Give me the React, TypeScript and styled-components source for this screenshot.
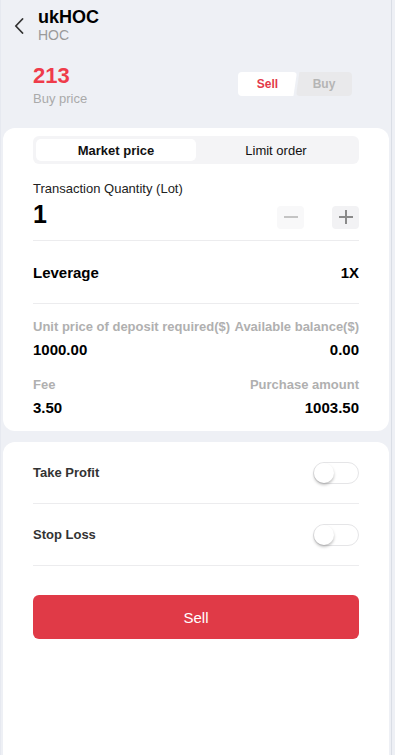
import React from "react";
import styled, { createGlobalStyle } from "styled-components";

const Global = createGlobalStyle`
  html, body { margin: 0; padding: 0; background: #eef0f5; }
  body { font-family: "Liberation Sans", Arial, sans-serif; color: #111; }
  * { box-sizing: border-box; }
`;

const Page = styled.div`
  width: 392px;
  min-height: 755px;
  background: #eef0f5;
  border-left: 1px solid #e6e9f0;
  border-right: 1px solid #dadee6;
  padding: 0 1px;
  display: flex;
  flex-direction: column;
`;

const Header = styled.div`
  display: flex;
  align-items: flex-start;
  padding: 7px 0 0 10px;
  gap: 12px;
  height: 43px;
`;

const BackBtn = styled.div`
  width: 14px;
  height: 18px;
  margin-top: 10px;
  display: flex;
  align-items: center;
  justify-content: center;
`;

const TitleBlock = styled.div`
  display: flex;
  flex-direction: column;
`;

const Title = styled.div`
  font-size: 18px;
  font-weight: 700;
  line-height: 20px;
  color: #000;
`;

const Sub = styled.div`
  font-size: 14px;
  line-height: 16px;
  color: #9a9a9a;
`;

const PriceRow = styled.div`
  display: flex;
  justify-content: space-between;
  align-items: flex-start;
  padding: 20px 38px 0 31px;
  height: 85px;
`;

const PriceBlock = styled.div`
  display: flex;
  flex-direction: column;
`;

const Price = styled.div`
  font-size: 22px;
  font-weight: 700;
  color: #ef3b4a;
  line-height: 26px;
`;

const PriceLabel = styled.div`
  font-size: 13px;
  color: #aaa;
  margin-top: 2px;
`;

const Toggle = styled.div`
  display: flex;
  margin-top: 9px;
  gap: 2px;
`;

const ToggleBtn = styled.div<{ $active?: boolean; $side: "l" | "r" }>`
  width: ${(p) => (p.$side === "l" ? 59 : 56)}px;
  height: 24px;
  display: flex;
  align-items: center;
  justify-content: center;
  font-size: 12px;
  font-weight: 700;
  color: ${(p) => (p.$active ? "#e3394a" : "#b5b5b5")};
  background: ${(p) => (p.$active ? "#fff" : "#e9e9eb")};
  border-radius: 4px;
  clip-path: ${(p) =>
    p.$side === "l"
      ? "polygon(0 0, 100% 0, 94% 100%, 0 100%)"
      : "polygon(6% 0, 100% 0, 100% 100%, 0 100%)"};
  margin-left: ${(p) => (p.$side === "r" ? "-3px" : "0")};
`;

const Card = styled.div<{ $grow?: boolean }>`
  background: #fff;
  border-radius: 12px;
  margin: 0 1px;
  padding: ${(p) => (p.$grow ? "0" : "8px")} 30px 0 30px;
  ${(p) => (p.$grow ? "flex: 1; border-bottom-left-radius: 0; border-bottom-right-radius: 0;" : "")}
`;

const Segmented = styled.div`
  display: flex;
  background: #f4f4f6;
  border-radius: 6px;
  padding: 3px;
  height: 28px;
`;

const Seg = styled.div<{ $active?: boolean }>`
  flex: 1;
  display: flex;
  align-items: center;
  justify-content: center;
  font-size: 13px;
  font-weight: ${(p) => (p.$active ? 700 : 400)};
  color: #111;
  background: ${(p) => (p.$active ? "#fff" : "transparent")};
  border-radius: 5px;
`;

const QtyLabel = styled.div`
  font-size: 13px;
  color: #222;
  margin-top: 18px;
  line-height: 14px;
`;

const QtyRow = styled.div`
  display: flex;
  align-items: center;
  justify-content: space-between;
  height: 30px;
  margin-top: 3px;
`;

const QtyValue = styled.div`
  font-size: 25px;
  font-weight: 700;
  color: #000;
`;

const Stepper = styled.div`
  display: flex;
  gap: 28px;
  margin-top: 6px;
`;

const StepBtn = styled.div<{ $disabled?: boolean }>`
  width: 27px;
  height: 23px;
  border-radius: 4px;
  background: ${(p) => (p.$disabled ? "#f8f8f9" : "#f2f2f4")};
  display: flex;
  align-items: center;
  justify-content: center;
`;

const Spacer = styled.div<{ $h: number }>`
  height: ${(p) => p.$h}px;
`;

const Divider = styled.div`
  height: 1px;
  background: #ececee;
`;

const LevRow = styled.div`
  display: flex;
  justify-content: space-between;
  align-items: center;
  height: 62px;
  font-size: 15px;
  font-weight: 700;
  color: #000;
`;

const InfoGrid = styled.div`
  display: grid;
  grid-template-columns: 1fr auto;
  padding-top: 15px;
  padding-bottom: 15px;
`;

const InfoCell = styled.div<{ $right?: boolean }>`
  display: flex;
  flex-direction: column;
  align-items: ${(p) => (p.$right ? "flex-end" : "flex-start")};
  margin-bottom: 19px;
  &:nth-last-child(-n + 2) { margin-bottom: 0; }
`;

const InfoLabel = styled.div`
  font-size: 13px;
  color: #b0b0b0;
  font-weight: 700;
  line-height: 16px;
  white-space: nowrap;
`;

const InfoValue = styled.div`
  font-size: 15px;
  font-weight: 700;
  color: #000;
  margin-top: 6px;
  line-height: 17px;
`;

const Gap = styled.div`
  height: 11px;
`;

const SwitchRow = styled.div`
  display: flex;
  justify-content: space-between;
  align-items: center;
  height: 61px;
  font-size: 13px;
  font-weight: 700;
  color: #333;
`;

const Switch = styled.div`
  width: 46px;
  height: 22px;
  border-radius: 11px;
  border: 1px solid #e5e5e7;
  background: #fff;
  position: relative;
`;

const Knob = styled.div`
  position: absolute;
  left: 0;
  top: 0;
  width: 20px;
  height: 20px;
  border-radius: 50%;
  background: #fff;
  box-shadow: 0 2px 3px rgba(0, 0, 0, 0.25);
`;

const SellButton = styled.div`
  margin-top: 29px;
  height: 44px;
  border-radius: 6px;
  background: #e03a47;
  color: #fff;
  font-size: 15px;
  display: flex;
  align-items: center;
  justify-content: center;
`;

export default function App() {
  return (
    <>
      <Global />
      <Page>
        <Header>
          <BackBtn>
            <svg width="10" height="16" viewBox="0 0 10 16" fill="none">
              <path d="M8.5 1 L1.8 8 L8.5 15" stroke="#333" strokeWidth="1.8" strokeLinecap="round" strokeLinejoin="round" />
            </svg>
          </BackBtn>
          <TitleBlock>
            <Title>ukHOC</Title>
            <Sub>HOC</Sub>
          </TitleBlock>
        </Header>
        <PriceRow>
          <PriceBlock>
            <Price>213</Price>
            <PriceLabel>Buy price</PriceLabel>
          </PriceBlock>
          <Toggle>
            <ToggleBtn $active $side="l">Sell</ToggleBtn>
            <ToggleBtn $side="r">Buy</ToggleBtn>
          </Toggle>
        </PriceRow>
        <Card>
          <Segmented>
            <Seg $active>Market price</Seg>
            <Seg>Limit order</Seg>
          </Segmented>
          <QtyLabel>Transaction Quantity (Lot)</QtyLabel>
          <QtyRow>
            <QtyValue>1</QtyValue>
            <Stepper>
              <StepBtn $disabled>
                <svg width="16" height="16" viewBox="0 0 16 16">
                  <path d="M1 8 H15" stroke="#c4c4c4" strokeWidth="2" />
                </svg>
              </StepBtn>
              <StepBtn>
                <svg width="16" height="16" viewBox="0 0 16 16">
                  <path d="M1 8 H15 M8 1 V15" stroke="#8a8a8a" strokeWidth="2" />
                </svg>
              </StepBtn>
            </Stepper>
          </QtyRow>
          <Spacer $h={11} />
          <Divider />
          <LevRow>
            <span>Leverage</span>
            <span>1X</span>
          </LevRow>
          <Divider />
          <InfoGrid>
            <InfoCell>
              <InfoLabel>Unit price of deposit required($)</InfoLabel>
              <InfoValue>1000.00</InfoValue>
            </InfoCell>
            <InfoCell $right>
              <InfoLabel>Available balance($)</InfoLabel>
              <InfoValue>0.00</InfoValue>
            </InfoCell>
            <InfoCell>
              <InfoLabel>Fee</InfoLabel>
              <InfoValue>3.50</InfoValue>
            </InfoCell>
            <InfoCell $right>
              <InfoLabel>Purchase amount</InfoLabel>
              <InfoValue>1003.50</InfoValue>
            </InfoCell>
          </InfoGrid>
        </Card>
        <Gap />
        <Card $grow>
          <SwitchRow>
            <span>Take Profit</span>
            <Switch><Knob /></Switch>
          </SwitchRow>
          <Divider />
          <SwitchRow>
            <span>Stop Loss</span>
            <Switch><Knob /></Switch>
          </SwitchRow>
          <Divider />
          <SellButton>Sell</SellButton>
        </Card>
      </Page>
    </>
  );
}
